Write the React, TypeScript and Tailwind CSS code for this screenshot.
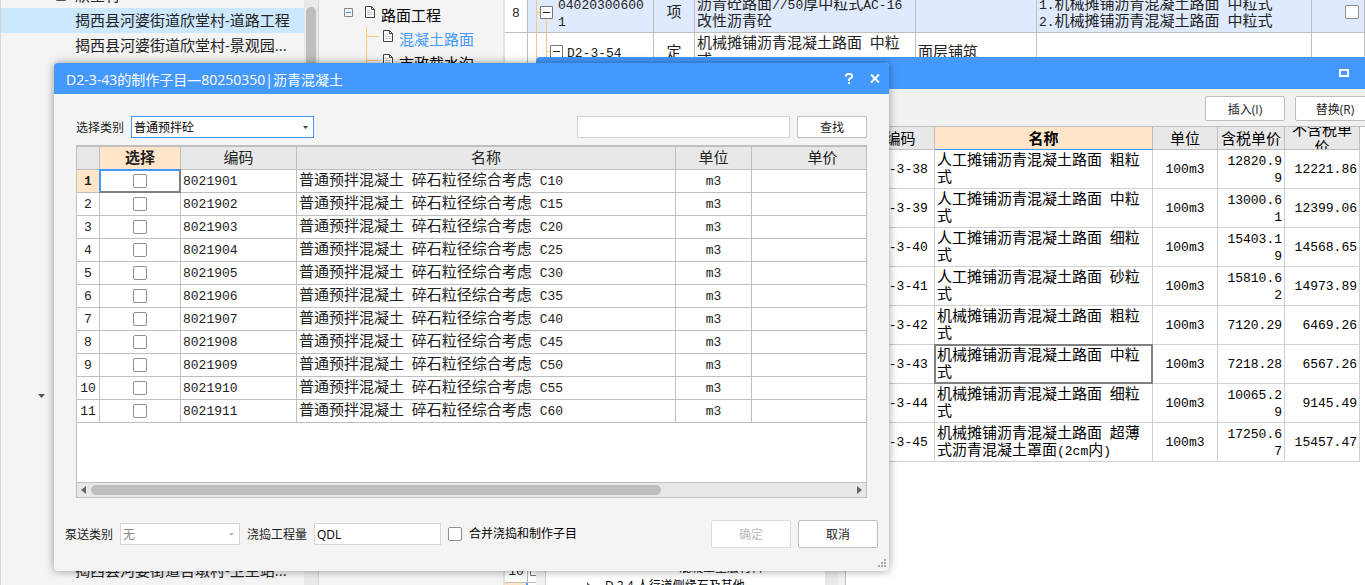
import { useState } from 'react';
import type { ReactNode } from 'react';

const materials = [
  { code: '8021901', grade: 'C10' },
  { code: '8021902', grade: 'C15' },
  { code: '8021903', grade: 'C20' },
  { code: '8021904', grade: 'C25' },
  { code: '8021905', grade: 'C30' },
  { code: '8021906', grade: 'C35' },
  { code: '8021907', grade: 'C40' },
  { code: '8021908', grade: 'C45' },
  { code: '8021909', grade: 'C50' },
  { code: '8021910', grade: 'C55' },
  { code: '8021911', grade: 'C60' },
];

const quotas = [
  { code: 'D2-3-38', name: '人工摊铺沥青混凝土路面 粗粒式', taxed: '12820.99', net: '12221.86' },
  { code: 'D2-3-39', name: '人工摊铺沥青混凝土路面 中粒式', taxed: '13000.61', net: '12399.06' },
  { code: 'D2-3-40', name: '人工摊铺沥青混凝土路面 细粒式', taxed: '15403.19', net: '14568.65' },
  { code: 'D2-3-41', name: '人工摊铺沥青混凝土路面 砂粒式', taxed: '15810.62', net: '14973.89' },
  { code: 'D2-3-42', name: '机械摊铺沥青混凝土路面 粗粒式', taxed: '7120.29', net: '6469.26' },
  { code: 'D2-3-43', name: '机械摊铺沥青混凝土路面 中粒式', taxed: '7218.28', net: '6567.26' },
  { code: 'D2-3-44', name: '机械摊铺沥青混凝土路面 细粒式', taxed: '10065.29', net: '9145.49' },
  { code: 'D2-3-45', name: '机械摊铺沥青混凝土路面 超薄式沥青混凝土罩面(2cm内)', taxed: '17250.67', net: '15457.47' },
];

// Grid text: latin runs are set in a monospace face, half a CJK cell wide
const Mono = ({ text }: { text: string }) => {
  return (
    <>
      {text.split(/([\x20-\x7e]+)/).map((part, i) =>
        i % 2 == 1 ? (
          <span key={i} className="font-['Liberation_Mono',monospace] text-[13px] leading-none">
            {part}
          </span>
        ) : (
          part
        )
      )}
    </>
  );
};

const Caret = ({ className }: { className: string }) => (
  <svg className={className} viewBox="0 0 7 4" preserveAspectRatio="none">
    <path d="M0 0h7L3.5 4z" fill="currentColor" />
  </svg>
);

const FileIcon = () => (
  <svg width="10" height="12" viewBox="0 0 10 12" fill="none" className="mb-[6px] shrink-0">
    <path d="M.5.5h6l3 3v8h-9z" fill="#fff" stroke="#444" />
    <path d="M6.5.5v3h3" stroke="#444" />
    <path d="M2 4.5h3M2 6.500h6M2 8.500h6" stroke="#ccc" />
  </svg>
);

const Check = ({ label, id }: { label?: string; id?: string }) => (
  <input
    id={id}
    type="checkbox"
    aria-label={label}
    className="block h-[14px] w-[14px] shrink-0 appearance-none rounded-[2px] border border-[#8f8f8f] bg-white checked:bg-[#4499ff]"
  />
);

const Btn = ({ children, disabled, className }: { children: ReactNode; disabled?: boolean; className: string }) => (
  <button
    disabled={disabled}
    className={`shrink-0 rounded-[2px] border border-[#bebebe] bg-white pt-[2px] text-xs text-[#222] disabled:border-[#dcdcdc] disabled:text-[#bbb] ${className}`}
  >
    {children}
  </button>
);

function ProjectTree() {
  const rows = Array.from({ length: 23 }, (_, i) => i);
  const names: { [key: number]: string } = {
    0: '揭西县河婆街道欣堂村-道路工程',
    1: '揭西县河婆街道欣堂村-景观园...',
    22: '揭西县河婆街道吉墩村-卫生站...',
  };
  return (
    <div className="flex w-[319px] shrink-0 border-x border-[#d5d5d5] bg-[#f4f4f4]">
      <ul className="-mt-[17px] flex-1 text-[15px] leading-[25px] text-[#222]">
        <li className="flex h-[25px] items-center pl-[55px]">
          <svg width="10" height="10" viewBox="0 0 10 10" fill="none" className="mr-[9px]">
            <path d="M.5.5h9v9h-9zM2 5h6" stroke="#555" />
          </svg>
          欣堂村
        </li>
        {rows.map((i) => (
          <li
            key={i}
            className={`flex h-[25px] items-center whitespace-nowrap ${i == 0 ? 'bg-[#cce8ff]' : ''} ${
              i == 15 ? 'pl-[37px]' : 'pl-[74px]'
            }`}
          >
            {i == 15 ? <Caret className="h-1 w-[7px] text-[#555]" /> : names[i]}
          </li>
        ))}
      </ul>
      <div className="w-[14px] shrink-0 bg-[#e9e9e9] px-[2px] pt-[7px]">
        <div className="h-[400px] rounded-full bg-[#bebebe]" />
      </div>
    </div>
  );
}

function SectionTree() {
  return (
    <div className="w-[186px] shrink-0 border-r-2 border-[#e2e2e2] bg-[#f4f4f4] pt-[3px] text-[15px] leading-6 whitespace-nowrap text-black">
      <div className="flex h-6 items-center pl-[25px]">
        <svg width="9" height="9" viewBox="0 0 9 9" fill="none" className="mr-3 mb-[6px]">
          <path d="M.5.5h8v8h-8z" stroke="#888" />
          <path d="M2 4.5h5" stroke="#2aa9e0" />
        </svg>
        <FileIcon />
        <span className="ml-[6px]">路面工程</span>
      </div>
      <ul className="ml-[47px] border-l border-[#ffc878]">
        <li className="flex h-6 items-center text-[#4499ff]">
          <span className="mr-1 mb-[6px] w-3 border-t border-[#ffc878]" />
          <FileIcon />
          <span className="ml-[6px]">混凝土路面</span>
        </li>
        <li className="flex h-6 items-center">
          <span className="mr-1 mb-[6px] w-3 border-t border-[#ffc878]" />
          <FileIcon />
          <span className="ml-[6px]">市政截水沟</span>
        </li>
      </ul>
    </div>
  );
}

function BillGrid() {
  const cell = 'border-r border-b border-[#bfbfbf] px-[2px] pb-[2px]';
  return (
    <div className="min-w-0 flex-1 overflow-hidden bg-white">
      <table className="-mt-[7px] w-full table-fixed border-separate border-spacing-0 text-[15px] leading-[17px] text-[#222]">
        <colgroup>
          <col className="w-[23px]" />
          <col className="w-[126px]" />
          <col className="w-[41px]" />
          <col className="w-[221px]" />
          <col className="w-[121px]" />
          <col className="w-[275px]" />
          <col />
        </colgroup>
        <tbody>
          <tr className="h-[40px] bg-[#dfeaff]">
            <td className={`${cell} bg-white text-center`}><Mono text="8" /></td>
            <td className={`${cell} relative pl-[30px] break-all`}>
              <svg className="absolute top-0 left-0" width="30" height="40" viewBox="0 0 30 40" fill="none">
                <path d="M8.500 0v40M8.500 19.500h4M18.500 26v14" stroke="#ffc878" />
                <path d="M12.500 13.500h12v12h-12z" fill="#fff" stroke="#777" />
                <path d="M15 19.500h7" stroke="#222" />
              </svg>
              <Mono text="040203006001" />
            </td>
            <td className={`${cell} text-center`}>项</td>
            <td className={cell}><Mono text="沥青砼路面//50厚中粒式AC-16改性沥青砼" /></td>
            <td className={cell} />
            <td className={cell}>
              <Mono text="1.机械摊铺沥青混凝土路面 中粒式" />
              <br />
              <Mono text="2.机械摊铺沥青混凝土路面 中粒式" />
            </td>
            <td className={`${cell} pr-[5px]`}>
              <div className="flex justify-end"><Check label="主要清单" /></div>
            </td>
          </tr>
          <tr className="h-[39px]">
            <td className={cell} />
            <td className={`${cell} relative pl-[39px]`}>
              <svg className="absolute top-0 left-0" width="38" height="39" viewBox="0 0 38 39" fill="none">
                <path d="M8.500 0v39M18.500 0v39M18.500 18.500h4" stroke="#ffc878" />
                <path d="M22.500 12.500h12v12h-12z" fill="#fff" stroke="#777" />
                <path d="M25 18.500h7" stroke="#222" />
              </svg>
              <Mono text="D2-3-54" />
            </td>
            <td className={`${cell} text-center`}>定</td>
            <td className={cell}><Mono text="机械摊铺沥青混凝土路面 中粒式" /></td>
            <td className={cell}>面层铺筑</td>
            <td className={cell} />
            <td className={cell} />
          </tr>
          <tr className="h-[486px]">
            <td className={cell} colSpan={7} />
          </tr>
          <tr className="h-[25px]">
            <td className={`${cell} text-center`}><Mono text="10" /></td>
            <td className={cell}>
              <svg width="13" height="13" viewBox="0 0 13 13" fill="none">
                <path d="M.5.5h12v12H.5zM3 6.500h7" stroke="#777" />
              </svg>
            </td>
            <td className={cell} colSpan={5} />
          </tr>
          <tr className="h-[25px]">
            <td className="border-r-2 border-[#4499ff] bg-[#ffe6c8]" />
            <td className={cell} colSpan={6} />
          </tr>
        </tbody>
      </table>
    </div>
  );
}

function QuotaWindow() {
  const head = 'border-r border-b border-[#bfbfbf] bg-[#e8e8e8] font-normal';
  const cell = 'border-r border-b border-[#d0d0d0] px-[2px] pb-[3px]';
  return (
    <section className="absolute top-[57px] right-0 bottom-0 left-[536px] flex flex-col overflow-hidden rounded-tl bg-[#f1f1f1]">
      <header className="flex h-8 shrink-0 items-center justify-end bg-[#4499ff] pr-4">
        <button aria-label="最大化" className="h-2 w-[10px] border-2 border-white" />
      </header>
      <div className="flex h-[37px] shrink-0 justify-end gap-[10px] overflow-hidden pt-[7px]">
        <Btn className="h-[25px] w-20">插入(I)</Btn>
        <Btn className="-mr-[10px] h-[25px] w-20">替换(R)</Btn>
      </div>
      <div className="flex min-h-0 flex-1">
        <div className="ml-[9px] flex w-[293px] shrink-0 border-l border-[#d0d0d0] bg-white">
          <ul className="flex flex-1 flex-col justify-end overflow-hidden text-xs leading-[18px] text-black">
            <li className="pl-[133px]">混凝土垫层材料</li>
            <li className="-mb-[10px] flex items-center pl-[41px]">
              <svg width="5" height="8" viewBox="0 0 5 8" className="mr-[13px]">
                <path d="M0 0l4 4-4 4z" fill="#666" />
              </svg>
              D.2.4 人行道侧缘石及其他
            </li>
          </ul>
          <div className="w-[13px] bg-[#e9e9e9]" />
        </div>
        <div className="ml-[7px] min-w-0 flex-1 overflow-hidden border-t border-l border-[#bfbfbf] bg-white">
          <table className="w-[514px] table-fixed border-separate border-spacing-0 text-[15px] leading-[17px] text-black">
            <colgroup>
              <col className="w-[21px]" />
              <col className="w-[68px]" />
              <col className="w-[218px]" />
              <col className="w-[65px]" />
              <col className="w-[67px]" />
              <col className="w-[75px]" />
            </colgroup>
            <thead>
              <tr className="h-[23px]">
                <th className={head} />
                <th className={head}>编码</th>
                <th className="border-r border-b border-r-[#bfbfbf] border-b-[#4499ff] bg-[#ffe6c8] font-bold">名称</th>
                <th className={head}>单位</th>
                <th className={head}>含税单价</th>
                <th className={head}>
                  <div className="flex h-[22px] items-center overflow-hidden px-1">不含税单价</div>
                </th>
              </tr>
            </thead>
            <tbody>
              {quotas.map((q) => (
                <tr key={q.code} className="h-[39px]">
                  <td className={cell} />
                  <td className={`${cell} text-center whitespace-nowrap`}><Mono text={q.code} /></td>
                  <td className={`${cell} relative`}>
                    {q.code == 'D2-3-43' && <div className="absolute -inset-px border-2 border-[#808080]" />}
                    <Mono text={q.name} />
                  </td>
                  <td className={`${cell} text-center`}><Mono text="100m3" /></td>
                  <td className={`${cell} pl-2 text-right break-all`}><Mono text={q.taxed} /></td>
                  <td className={`${cell} text-right`}><Mono text={q.net} /></td>
                </tr>
              ))}
            </tbody>
          </table>
        </div>
      </div>
    </section>
  );
}

function MaterialDialog() {
  const [category, setCategory] = useState('普通预拌砼');
  const [quantity, setQuantity] = useState('QDL');
  const head = 'border-r border-b border-[#bfbfbf] bg-[#e8e8e8] pb-[2px] font-normal';
  const cell = 'border-r border-b border-[#bfbfbf] px-[2px] pb-[3px]';
  return (
    <section
      role="dialog"
      aria-labelledby="dialog-title"
      className="absolute top-[63px] left-[54px] flex h-[508px] w-[835px] flex-col rounded bg-[#f4f4f4] text-xs text-[#222] shadow-[0_0_9px_rgba(0,0,0,0.4)]"
    >
      <header className="flex h-[31px] shrink-0 items-center rounded-t bg-[#4499ff] pr-2 pl-3 text-white">
        <h1 id="dialog-title" className="flex-1 pt-[2px] text-sm">D2-3-43的制作子目—80250350|沥青混凝土</h1>
        <button aria-label="帮助" className="mr-[14px] w-3">
          <svg width="8" height="11" viewBox="0 0 8 11" fill="none" className="mx-auto">
            <path d="M1 3.500V2.500L2.500 1h3L7 2.500v1.500L4 6.500V8M4 9v2" stroke="#fff" strokeWidth="2" />
          </svg>
        </button>
        <button aria-label="关闭" className="w-3">
          <svg width="10" height="9" viewBox="0 0 10 9" fill="none" className="mx-auto">
            <path d="M1 .5l8 8M9 .5l-8 8" stroke="#fff" strokeWidth="2" />
          </svg>
        </button>
      </header>

      <div className="flex items-center pt-[22px] pr-[22px] pl-[22px]">
        <label htmlFor="category" className="w-[55px] shrink-0 pt-[2px]">选择类别</label>
        <div className="relative w-[183px] shrink-0">
          <select
            id="category"
            value={category}
            onChange={(e) => setCategory(e.target.value)}
            className="block h-[22px] w-full appearance-none border border-[#4499ff] bg-white px-[2px] pt-[2px] text-black"
          >
            <option>普通预拌砼</option>
          </select>
          <Caret className="pointer-events-none absolute top-[10px] right-[6px] h-[3px] w-[5px] text-[#444]" />
        </div>
        <input aria-label="查找内容" className="mr-[7px] ml-auto h-[22px] w-[213px] border border-[#d5d5d5] bg-white px-1" />
        <Btn className="h-[22px] w-[70px]">查找</Btn>
      </div>

      <div className="mx-[22px] mt-[7px] flex h-[353px] flex-col border border-t-2 border-[#bfbfbf] bg-white">
        <div className="min-h-0 flex-1 overflow-hidden">
          <table className="w-[817px] table-fixed border-separate border-spacing-0 text-[15px] leading-[17px]">
            <colgroup>
              <col className="w-[23px]" />
              <col className="w-[81px]" />
              <col className="w-[116px]" />
              <col className="w-[379px]" />
              <col className="w-[76px]" />
              <col className="w-[142px]" />
            </colgroup>
            <thead>
              <tr className="h-[23px]">
                <th className={head} />
                <th className="border-r border-b border-[#bfbfbf] bg-[#ffe6c8] pb-[2px] font-bold">选择</th>
                <th className={head}>编码</th>
                <th className={head}>名称</th>
                <th className={head}>单位</th>
                <th className={head}>单价</th>
              </tr>
            </thead>
            <tbody>
              {materials.map((m, i) => (
                <tr key={m.code} className="h-[23px]">
                  <td className={`${cell} text-center ${i == 0 ? 'bg-[#ffe6c8] font-bold' : ''}`}>
                    <Mono text={String(i + 1)} />
                  </td>
                  <td className="relative border-r border-b border-[#bfbfbf]">
                    {i == 0 && (
                      <div className="absolute -inset-px border-2 border-t-[#4499ff] border-r-[#808080] border-b-[#808080] border-l-[#4499ff]" />
                    )}
                    <div className="relative flex justify-center"><Check label={m.code} /></div>
                  </td>
                  <td className={cell}><Mono text={m.code} /></td>
                  <td className={cell}><Mono text={`普通预拌混凝土 碎石粒径综合考虑 ${m.grade}`} /></td>
                  <td className={`${cell} text-center`}><Mono text="m3" /></td>
                  <td className={cell} />
                </tr>
              ))}
            </tbody>
          </table>
        </div>
        <div className="flex h-[15px] shrink-0 items-center border-t border-[#bfbfbf] bg-[#e8e8e8] px-1">
          <svg width="5" height="8" viewBox="0 0 5 8"><path d="M5 0v8L0 4z" fill="#666" /></svg>
          <div className="ml-[5px] h-[10px] w-[570px] rounded-full bg-[#bebebe]" />
          <svg width="5" height="8" viewBox="0 0 5 8" className="ml-auto"><path d="M0 0v8l5-4z" fill="#666" /></svg>
        </div>
      </div>

      <div className="flex h-[72px] items-center pr-[11px] pl-[11px]">
        <label htmlFor="pump" className="w-[55px] shrink-0 pt-[2px]">泵送类别</label>
        <div className="relative mr-[7px] w-[120px] shrink-0">
          <select
            id="pump"
            disabled
            className="block h-[22px] w-full appearance-none border border-[#d5d5d5] bg-white px-[2px] pt-[2px] text-[#888] opacity-100"
          >
            <option>无</option>
          </select>
          <Caret className="pointer-events-none absolute top-[10px] right-[6px] h-[3px] w-[5px] text-[#bbb]" />
        </div>
        <label htmlFor="quantity" className="w-[67px] shrink-0 pt-[2px]">浇捣工程量</label>
        <input
          id="quantity"
          value={quantity}
          onChange={(e) => setQuantity(e.target.value)}
          className="mr-[7px] h-[22px] w-[127px] border border-[#d5d5d5] bg-white px-[2px] text-black"
        />
        <Check id="merge" />
        <label htmlFor="merge" className="ml-[7px] text-black">合并浇捣和制作子目</label>
        <Btn disabled className="mr-[7px] ml-auto h-7 w-20">确定</Btn>
        <Btn className="h-7 w-20">取消</Btn>
      </div>

      <svg className="absolute right-[3px] bottom-1" width="8" height="8" viewBox="0 0 8 8" fill="#aaa">
        <path d="M6 0h2v2H6zM6 3h2v2H6zM3 3h2v2H3zM6 6h2v2H6zM3 6h2v2H3zM0 6h2v2H0z" />
      </svg>
    </section>
  );
}

export default function App() {
  return (
    <main className="relative flex h-screen overflow-hidden bg-[#f4f4f4] font-['Open_Sans','Noto_Sans_CJK_SC',sans-serif]">
      <ProjectTree />
      <SectionTree />
      <BillGrid />
      <QuotaWindow />
      <MaterialDialog />
    </main>
  );
}
